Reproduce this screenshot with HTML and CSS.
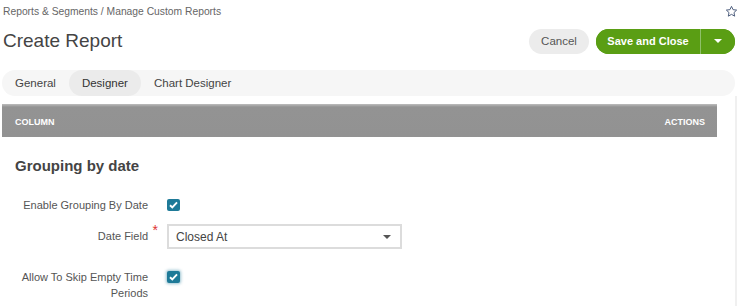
FILE: index.html
```html
<!DOCTYPE html>
<html>
<head>
<meta charset="utf-8">
<link rel="stylesheet" href="styles.css">
</head>
<body>
<div class="page">
  <div class="topline">
    <div class="breadcrumb">Reports &amp; Segments / Manage Custom Reports</div>
    <svg class="star" width="13" height="13" viewBox="0 0 24 24"><path d="M12 2.5l2.9 6.1 6.6.8-4.9 4.6 1.3 6.6L12 17.3l-5.9 3.3 1.3-6.6-4.9-4.6 6.6-.8z" fill="none" stroke="#4a5a7a" stroke-width="1.8" stroke-linejoin="round"/></svg>
  </div>
  <div class="titlebar">
    <h1 class="title">Create Report</h1>
    <div class="actions">
      <button class="btn-cancel">Cancel</button>
      <div class="btn-group">
        <button class="btn-save">Save and Close</button>
        <button class="btn-caret"><span class="caret"></span></button>
      </div>
    </div>
  </div>
  <div class="tabs">
    <span class="tab">General</span>
    <span class="tab active">Designer</span>
    <span class="tab">Chart Designer</span>
  </div>
  <div class="content">
    <div class="inner">
      <div class="grid-head">
        <span>COLUMN</span>
        <span>ACTIONS</span>
      </div>
      <h2 class="section">Grouping by date</h2>
      <div class="form">
        <div class="row">
          <label class="lbl">Enable Grouping By Date</label>
          <div class="ctl"><span class="check"><svg width="9" height="8" viewBox="0 0 9 8"><path d="M1 4.2l2.3 2.2L8 1.3" fill="none" stroke="#fff" stroke-width="1.9"/></svg></span></div>
        </div>
        <div class="row row-select">
          <label class="lbl">Date Field<em class="req">*</em></label>
          <div class="ctl">
            <div class="select"><span>Closed At</span><span class="sel-caret"></span></div>
          </div>
        </div>
        <div class="row row-multi">
          <label class="lbl">Allow To Skip Empty Time Periods</label>
          <div class="ctl"><span class="check focus"><svg width="9" height="8" viewBox="0 0 9 8"><path d="M1 4.2l2.3 2.2L8 1.3" fill="none" stroke="#fff" stroke-width="1.9"/></svg></span></div>
        </div>
      </div>
    </div>
  </div>
</div>
</body>
</html>
```

FILE: styles.css
```css
* { box-sizing: border-box; }
html, body { margin: 0; padding: 0; background: #fff; }
body { font-family: "Liberation Sans", Arial, sans-serif; color: #444; overflow: hidden; }
.page { width: 738px; height: 306px; }
.topline { display: flex; justify-content: space-between; align-items: center; height: 22px; padding: 0 0 0 3px; }
.breadcrumb { font-size: 10.3px; color: #666; }
.star { margin-top: 1px; }
.titlebar { display: flex; justify-content: space-between; align-items: center; height: 40px; padding: 0 3px 2px 3px; }
.title { margin: 0; font-size: 19px; font-weight: normal; color: #444; }
.actions { display: flex; align-items: center; gap: 7px; }
button { font-family: inherit; border: 0; cursor: pointer; }
.btn-cancel { height: 25px; width: 60px; padding: 0; border-radius: 13px; background: #ececec; color: #555; font-size: 11.5px; }
.btn-group { display: flex; height: 25px; border-radius: 13px; overflow: hidden; background: #5a9e14; }
.btn-save { background: #5a9e14; color: #fff; font-weight: bold; font-size: 11px; width: 105px; padding: 0; height: 25px; border-right: 1px solid #8fc06a; }
.btn-caret { background: #5a9e14; width: 34px; height: 25px; display: flex; align-items: center; justify-content: center; padding: 0; }
.caret { width: 0; height: 0; border-left: 4px solid transparent; border-right: 4px solid transparent; border-top: 4px solid #fff; }
.tabs { margin: 8px 3px 0 2px; height: 26px; background: #f6f6f6; border-radius: 13px; display: flex; align-items: center; }
.tab { font-size: 11.5px; color: #444; padding: 0 13px; height: 26px; line-height: 26px; border-radius: 13px; }
.tab.active { background: #ebebeb; color: #333; }
.content { display: flex; }
.inner { flex: 1; padding: 8px 18px 0 2px; border-right: 2px solid #f0f0f0; margin-right: 1px; height: 210px; }
.grid-head { height: 33px; background: linear-gradient(#bdbdbd 0, #939393 3px, #929292 100%); display: flex; justify-content: space-between; align-items: center; padding: 2px 12px 0 13px; color: #fff; font-size: 9px; font-weight: bold; }
.section { margin: 18px 0 0 13px; font-size: 15px; font-weight: bold; color: #444; height: 22px; line-height: 22px; }
.form { margin-top: 20px; }
.row { display: flex; align-items: flex-start; }
.lbl { width: 153px; text-align: right; font-size: 11px; color: #555; padding-right: 7px; line-height: 16px; position: relative; }
.ctl { margin-left: 12px; }
.check { display: flex; align-items: center; justify-content: center; width: 13px; height: 12px; background: #1e7a98; border-radius: 2px; margin-top: 2px; }
.check.focus { box-shadow: 0 0 3px 1px rgba(30,122,152,0.45); }
.row-select { margin-top: 11px; }
.row-select .lbl { line-height: 24px; }
.req { position: absolute; right: -3px; top: -6px; color: #d33; font-style: normal; font-size: 14px; }
.select { width: 235px; height: 25px; border: 2px solid #dcdcdc; display: flex; align-items: center; justify-content: space-between; padding: 0 9px 0 7px; font-size: 12px; color: #444; }
.sel-caret { width: 0; height: 0; border-left: 4px solid transparent; border-right: 4px solid transparent; border-top: 4px solid #555; }
.row-multi { margin-top: 20px; }
.row-multi .lbl { padding-left: 14px; }
```
